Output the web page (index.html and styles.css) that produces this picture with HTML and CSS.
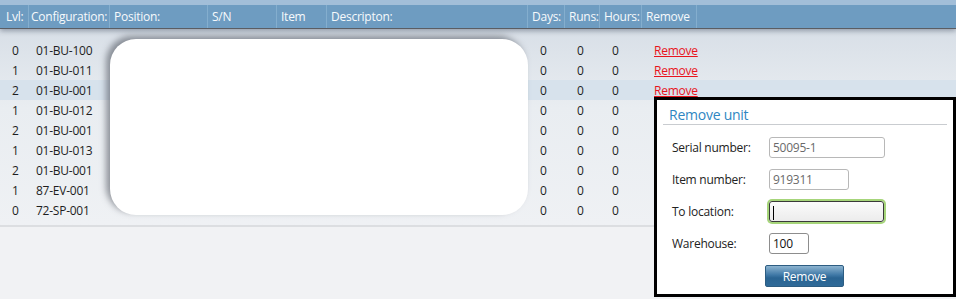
FILE: index.html
```html
<!DOCTYPE html>
<html lang="en">
  <head>
    <meta charset="UTF-8" />
    <title>Units</title>
    <link rel="stylesheet" href="styles.css">
  </head>
  <body>
    <div class="grid">
      <div class="row head">
        <div class="c lvl">Lvl:</div>
        <div class="c conf">Configuration:</div>
        <div class="c pos">Position:</div>
        <div class="c sn">S/N</div>
        <div class="c item">Item</div>
        <div class="c desc">Descripton:</div>
        <div class="c days">Days:</div>
        <div class="c runs">Runs:</div>
        <div class="c hours">Hours:</div>
        <div class="c rem">Remove</div>
      </div>
      <div class="rows">
        <div class="row"><div class="c lvl">0</div><div class="c conf">01-BU-100</div><div class="c pos"></div><div class="c sn"></div><div class="c item"></div><div class="c desc"></div><div class="c days">0</div><div class="c runs">0</div><div class="c hours">0</div><div class="c rem"><a href="#">Remove</a></div></div>
        <div class="row"><div class="c lvl">1</div><div class="c conf">01-BU-011</div><div class="c pos"></div><div class="c sn"></div><div class="c item"></div><div class="c desc"></div><div class="c days">0</div><div class="c runs">0</div><div class="c hours">0</div><div class="c rem"><a href="#">Remove</a></div></div>
        <div class="row sel"><div class="c lvl">2</div><div class="c conf">01-BU-001</div><div class="c pos"></div><div class="c sn"></div><div class="c item"></div><div class="c desc"></div><div class="c days">0</div><div class="c runs">0</div><div class="c hours">0</div><div class="c rem"><a href="#">Remove</a></div></div>
        <div class="row"><div class="c lvl">1</div><div class="c conf">01-BU-012</div><div class="c pos"></div><div class="c sn"></div><div class="c item"></div><div class="c desc"></div><div class="c days">0</div><div class="c runs">0</div><div class="c hours">0</div><div class="c rem"></div></div>
        <div class="row"><div class="c lvl">2</div><div class="c conf">01-BU-001</div><div class="c pos"></div><div class="c sn"></div><div class="c item"></div><div class="c desc"></div><div class="c days">0</div><div class="c runs">0</div><div class="c hours">0</div><div class="c rem"></div></div>
        <div class="row"><div class="c lvl">1</div><div class="c conf">01-BU-013</div><div class="c pos"></div><div class="c sn"></div><div class="c item"></div><div class="c desc"></div><div class="c days">0</div><div class="c runs">0</div><div class="c hours">0</div><div class="c rem"></div></div>
        <div class="row"><div class="c lvl">2</div><div class="c conf">01-BU-001</div><div class="c pos"></div><div class="c sn"></div><div class="c item"></div><div class="c desc"></div><div class="c days">0</div><div class="c runs">0</div><div class="c hours">0</div><div class="c rem"></div></div>
        <div class="row"><div class="c lvl">1</div><div class="c conf">87-EV-001</div><div class="c pos"></div><div class="c sn"></div><div class="c item"></div><div class="c desc"></div><div class="c days">0</div><div class="c runs">0</div><div class="c hours">0</div><div class="c rem"></div></div>
        <div class="row"><div class="c lvl">0</div><div class="c conf">72-SP-001</div><div class="c pos"></div><div class="c sn"></div><div class="c item"></div><div class="c desc"></div><div class="c days">0</div><div class="c runs">0</div><div class="c hours">0</div><div class="c rem"></div></div>
      </div>
    </div>

    <div class="blank"></div>

    <div class="dialog">
      <div class="title">Remove unit</div>
      <div class="field"><label>Serial number:</label><div class="box w115 ro">50095-1</div></div>
      <div class="field"><label>Item number:</label><div class="box w79 ro">919311</div></div>
      <div class="field"><label>To location:</label><div class="box w116 focus"><span class="caret"></span></div></div>
      <div class="field"><label>Warehouse:</label><div class="box w39">100</div></div>
      <div class="actions"><button class="btn">Remove</button></div>
    </div>
  </body>
</html>
```

FILE: styles.css
```css
body {
  margin: 0;
  background-color: #f1f2f4;
  font-family: "Open Sans", "Noto Sans", sans-serif;
  font-size: 12px;
  letter-spacing: -0.25px;
  color: #1e1e1e;
  width: 956px;
  height: 299px;
  overflow: hidden;
  position: relative;
}
.grid {
  width: 100%;
}
.row {
  display: flex;
  height: 20px;
  align-items: center;
}
.row.head {
  height: 23px;
  border-top: 5px solid #a2bed8;
  background-color: #6e9cc1;
  color: #f7fafc;
  border-bottom: 1px solid #5b5d63;
  box-shadow: 0 2px 5px rgba(60, 70, 90, 0.45);
  position: relative;
  z-index: 1;
}
.row.head .c {
  height: 23px;
  line-height: 23px;
  padding-left: 4px;
  border-right: 1px solid #84aece;
}
.rows {
  padding: 11px 0 5px;
  background: linear-gradient(#d8dfe7, #e9edf1 40%, #eff1f4);
  border-bottom: 2px solid #dcdee1;
}
.row.sel {
  background-color: #d7e2ec;
}
.c {
  box-sizing: border-box;
  white-space: nowrap;
  overflow: visible;
  padding-left: 12px;
}
.lvl { width: 29px; padding-left: 12px; }
.row.head .lvl { padding-left: 6px; }
.conf { width: 81px; padding-left: 7px; }
.row.head .conf { padding-left: 2px; }
.pos { width: 98px; }
.sn { width: 69px; }
.item { width: 50px; }
.desc { width: 201px; }
.days { width: 37px; }
.runs { width: 35px; }
.hours { width: 42px; }
.rem { width: 55px; }
.rem a {
  color: #e8141c;
  text-decoration: underline;
}

/* covered area */
.blank {
  position: absolute;
  left: 110px;
  top: 39px;
  width: 418px;
  height: 176px;
  background-color: #fff;
  border-radius: 26px;
  box-shadow: -4px -3px 6px rgba(80, 85, 95, 0.6);
}

.dialog {
  position: absolute;
  left: 654px;
  top: 97px;
  width: 296px;
  height: 194px;
  border: 3px solid #000;
  background-color: #fff;
}
.title {
  margin: 5px 6px 0;
  padding: 0 0 0 6px;
  font-size: 14px;
  color: #2f86c2;
  border-bottom: 1px solid #c9ccd0;
}
.field {
  display: flex;
  align-items: center;
  padding-left: 15px;
  height: 21px;
  margin-top: 11px;
}
.title + .field {
  margin-top: 12px;
}
.field label {
  width: 97px;
  color: #222;
}
.box {
  box-sizing: border-box;
  height: 21px;
  line-height: 19px;
  border: 1px solid #8d8d8d;
  border-radius: 3px;
  padding-left: 3px;
  color: #111;
  background-color: #fff;
}
.box.ro {
  border-color: #b8b8b8;
  color: #6a6a6a;
}
.w115 { width: 116px; }
.w79 { width: 80px; }
.w116 { width: 115px; margin-left: 0; }
.w39 { width: 40px; }
.box.focus {
  height: 21px;
  border: 1px solid #3a3a3a;
  box-shadow: 0 0 0 2px #a6d57a;
  background: linear-gradient(#fbfbfb, #ececec);
}
.caret {
  display: inline-block;
  width: 1px;
  height: 14px;
  background-color: #000;
  vertical-align: middle;
}
.actions {
  padding-left: 108px;
  margin-top: 11px;
}
.btn {
  width: 79px;
  height: 22px;
  border: 1px solid #2d5d82;
  border-radius: 2px;
  background: linear-gradient(#8db4d0, #3f78a6 45%, #2a6492 60%, #2f6a98);
  color: #fff;
  font-family: "Open Sans", "Noto Sans", sans-serif;
  font-size: 12px;
  letter-spacing: -0.25px;
  padding: 0;
}
```
